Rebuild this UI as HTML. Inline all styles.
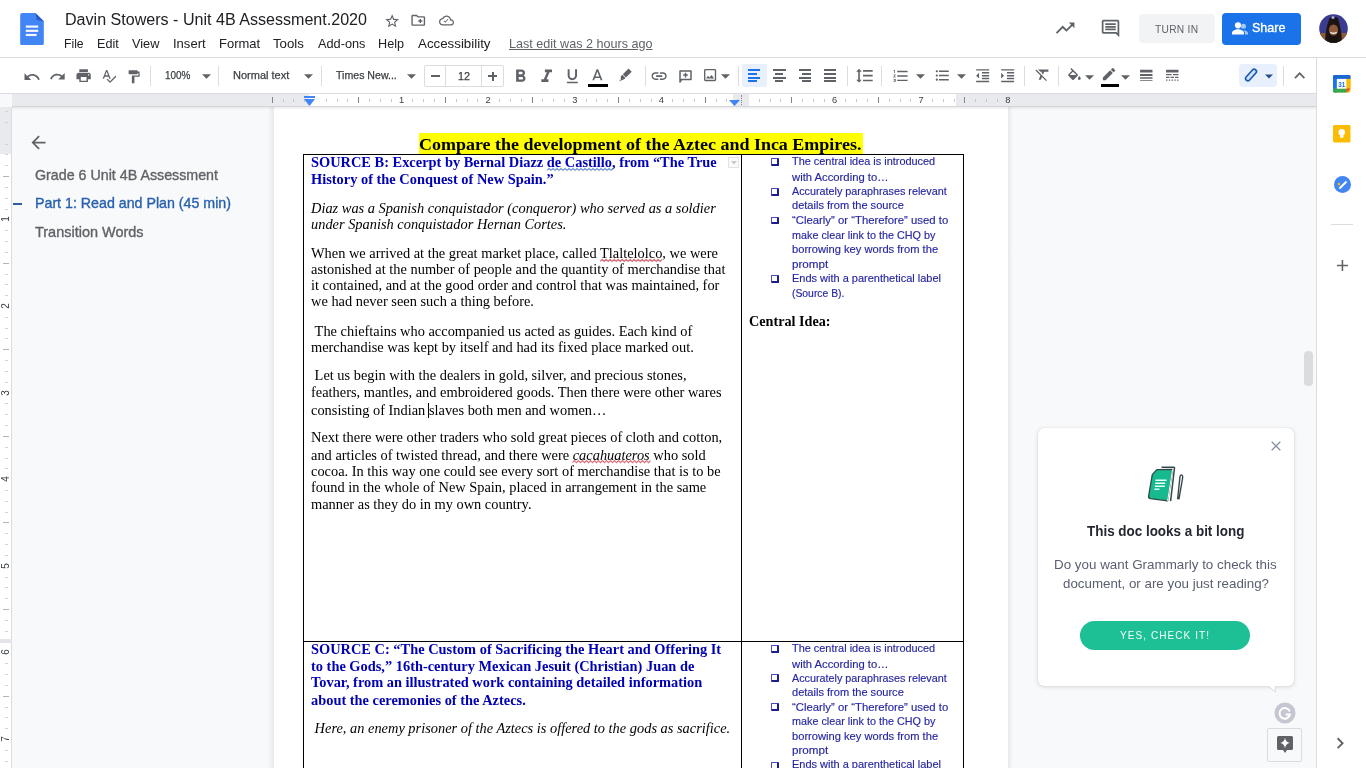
<!DOCTYPE html>
<html><head><meta charset="utf-8"><title>Davin Stowers - Unit 4B Assessment.2020 - Google Docs</title>
<style>
*{margin:0;padding:0;box-sizing:border-box}
html,body{width:1366px;height:768px;overflow:hidden;background:#f8f9fa;font-family:"Liberation Sans",sans-serif;position:relative}
.a{position:absolute}
#root{position:absolute;left:0;top:0;width:1366px;height:768px;will-change:transform}
</style></head><body><div id="root">
<div class="a" style="left:0px;top:0px;width:1366px;height:768px;background:#f8f9fa"></div>
<div class="a" style="left:274px;top:107px;width:734px;height:661px;background:#fff"></div>
<div class="a" style="left:268px;top:107px;width:6px;height:661px;background:linear-gradient(to right,rgba(60,64,67,0),rgba(60,64,67,.09))"></div>
<div class="a" style="left:1008px;top:107px;width:5px;height:661px;background:linear-gradient(to left,rgba(60,64,67,0),rgba(60,64,67,.09))"></div>
<div class="a" style="left:0px;top:0px;width:1366px;height:58px;background:#fff;border-bottom:1px solid #dadce0"></div>
<div class="a" style="left:0px;top:58px;width:1316px;height:36px;background:#fff;border-bottom:1px solid #dadce0"></div>
<div class="a" style="left:1316px;top:58px;width:50px;height:710px;background:#fff;border-left:1px solid #dadce0"></div>
<div class="a" style="left:274px;top:107px;width:734px;height:661px;overflow:hidden"><div class="a" style="left:-274px;top:-107px;width:1366px;height:768px">
<div class="a" style="left:419px;top:133px;width:444px;height:21px;background:#ffff00"></div>
<div class="a" style="left:303px;top:154px;width:661px;height:1px;background:#000"></div>
<div class="a" style="left:303px;top:641px;width:661px;height:1px;background:#000"></div>
<div class="a" style="left:303px;top:154px;width:1px;height:614px;background:#000"></div>
<div class="a" style="left:741px;top:154px;width:1px;height:614px;background:#000"></div>
<div class="a" style="left:963px;top:154px;width:1px;height:614px;background:#000"></div>
<div class="a" style="left:770.5px;top:158px;width:8.5px;height:7.5px;border:1px solid #4a4ac0;border-right:2px solid #1c1c8a;border-bottom:2px solid #1c1c8a;border-radius:1px;"></div>
<div class="a" style="left:770.5px;top:188px;width:8.5px;height:7.5px;border:1px solid #4a4ac0;border-right:2px solid #1c1c8a;border-bottom:2px solid #1c1c8a;border-radius:1px;"></div>
<div class="a" style="left:770.5px;top:216.5px;width:8.5px;height:7.5px;border:1px solid #4a4ac0;border-right:2px solid #1c1c8a;border-bottom:2px solid #1c1c8a;border-radius:1px;"></div>
<div class="a" style="left:770.5px;top:275px;width:8.5px;height:7.5px;border:1px solid #4a4ac0;border-right:2px solid #1c1c8a;border-bottom:2px solid #1c1c8a;border-radius:1px;"></div>
<div class="a" style="left:770.5px;top:645px;width:8.5px;height:7.5px;border:1px solid #4a4ac0;border-right:2px solid #1c1c8a;border-bottom:2px solid #1c1c8a;border-radius:1px;"></div>
<div class="a" style="left:770.5px;top:674px;width:8.5px;height:7.5px;border:1px solid #4a4ac0;border-right:2px solid #1c1c8a;border-bottom:2px solid #1c1c8a;border-radius:1px;"></div>
<div class="a" style="left:770.5px;top:703px;width:8.5px;height:7.5px;border:1px solid #4a4ac0;border-right:2px solid #1c1c8a;border-bottom:2px solid #1c1c8a;border-radius:1px;"></div>
<div class="a" style="left:770.5px;top:762px;width:8.5px;height:7.5px;border:1px solid #4a4ac0;border-right:2px solid #1c1c8a;border-bottom:2px solid #1c1c8a;border-radius:1px;"></div>
<svg class="a" style="left:0;top:0" width="1366" height="768"><path d="M547.0 170.3 L549.0 168.3 L551.0 170.3 L553.0 168.3 L555.0 170.3 L557.0 168.3 L559.0 170.3 L561.0 168.3 L563.0 170.3 L565.0 168.3 L567.0 170.3 L569.0 168.3 L571.0 170.3 L573.0 168.3 L575.0 170.3 L577.0 168.3 L579.0 170.3 L581.0 168.3 L583.0 170.3 L585.0 168.3 L587.0 170.3 L589.0 168.3 L591.0 170.3 L593.0 168.3 L595.0 170.3 L597.0 168.3 L599.0 170.3 L601.0 168.3 L603.0 170.3 L605.0 168.3 L607.0 170.3 L609.0 168.3 L611.0 170.3 L613.0 168.3" stroke="#7fa3d6" stroke-width="1.2" fill="none"/></svg>
<svg class="a" style="left:0;top:0" width="1366" height="768"><path d="M600.2 261.4 L602.2 259.4 L604.2 261.4 L606.2 259.4 L608.2 261.4 L610.2 259.4 L612.2 261.4 L614.2 259.4 L616.2 261.4 L618.2 259.4 L620.2 261.4 L622.2 259.4 L624.2 261.4 L626.2 259.4 L628.2 261.4 L630.2 259.4 L632.2 261.4 L634.2 259.4 L636.2 261.4 L638.2 259.4 L640.2 261.4 L642.2 259.4 L644.2 261.4 L646.2 259.4 L648.2 261.4 L650.2 259.4 L652.2 261.4 L654.2 259.4 L656.2 261.4 L658.2 259.4 L660.2 261.4 L662.2 259.4" stroke="#d9707a" stroke-width="1.2" fill="none"/></svg>
<svg class="a" style="left:0;top:0" width="1366" height="768"><path d="M572.5 462.6 L574.5 460.6 L576.5 462.6 L578.5 460.6 L580.5 462.6 L582.5 460.6 L584.5 462.6 L586.5 460.6 L588.5 462.6 L590.5 460.6 L592.5 462.6 L594.5 460.6 L596.5 462.6 L598.5 460.6 L600.5 462.6 L602.5 460.6 L604.5 462.6 L606.5 460.6 L608.5 462.6 L610.5 460.6 L612.5 462.6 L614.5 460.6 L616.5 462.6 L618.5 460.6 L620.5 462.6 L622.5 460.6 L624.5 462.6 L626.5 460.6 L628.5 462.6 L630.5 460.6 L632.5 462.6 L634.5 460.6 L636.5 462.6 L638.5 460.6 L640.5 462.6 L642.5 460.6 L644.5 462.6 L646.5 460.6 L648.5 462.6 L650.5 460.6" stroke="#d9707a" stroke-width="1.2" fill="none"/></svg>
<div class="a" style="left:428px;top:403px;width:1px;height:14.5px;background:#000"></div>
<div class="a" style="left:728.3px;top:157px;width:11px;height:10.5px;border:1px solid #e3e3e3;background:#fafafa"></div>
<svg class="a" style="left:731px;top:160.5px" width="6" height="4" viewBox="0 0 6 4"><path d="M0 0h6L3 3.5z" fill="#c8c8c8"/></svg>
<div class="a" style="left:419.30px;top:134.66px;font-family:'Liberation Serif',serif;font-size:16.7px;font-weight:bold;line-height:20px;white-space:nowrap;color:#000;transform:scaleX(1.0779);transform-origin:0 0;">Compare the development of the Aztec and Inca Empires.</div>
<div class="a" style="left:311.00px;top:151.74px;font-family:'Liberation Serif',serif;font-size:14.4px;font-weight:bold;line-height:20px;white-space:nowrap;color:#0000b5;">SOURCE B: Excerpt by Bernal Diazz de Castillo, from “The True</div>
<div class="a" style="left:311.00px;top:169.14px;font-family:'Liberation Serif',serif;font-size:14.4px;font-weight:bold;line-height:20px;white-space:nowrap;color:#0000b5;">History of the Conquest of New Spain.”</div>
<div class="a" style="left:311.00px;top:197.64px;font-family:'Liberation Serif',serif;font-size:14.4px;font-style:italic;line-height:20px;white-space:nowrap;color:#000;">Diaz was a Spanish conquistador (conqueror) who served as a soldier</div>
<div class="a" style="left:311.00px;top:213.74px;font-family:'Liberation Serif',serif;font-size:14.4px;font-style:italic;line-height:20px;white-space:nowrap;color:#000;">under Spanish conquistador Hernan Cortes.</div>
<div class="a" style="left:311.00px;top:242.94px;font-family:'Liberation Serif',serif;font-size:14.4px;line-height:20px;white-space:nowrap;color:#000;">When we arrived at the great market place, called Tlaltelolco, we were</div>
<div class="a" style="left:311.00px;top:258.74px;font-family:'Liberation Serif',serif;font-size:14.4px;line-height:20px;white-space:nowrap;color:#000;">astonished at the number of people and the quantity of merchandise that</div>
<div class="a" style="left:311.00px;top:274.94px;font-family:'Liberation Serif',serif;font-size:14.4px;line-height:20px;white-space:nowrap;color:#000;">it contained, and at the good order and control that was maintained, for</div>
<div class="a" style="left:311.00px;top:291.24px;font-family:'Liberation Serif',serif;font-size:14.4px;line-height:20px;white-space:nowrap;color:#000;">we had never seen such a thing before.</div>
<div class="a" style="left:311.00px;top:320.74px;font-family:'Liberation Serif',serif;font-size:14.4px;line-height:20px;white-space:nowrap;color:#000;">&nbsp;The chieftains who accompanied us acted as guides. Each kind of</div>
<div class="a" style="left:311.00px;top:336.74px;font-family:'Liberation Serif',serif;font-size:14.4px;line-height:20px;white-space:nowrap;color:#000;">merchandise was kept by itself and had its fixed place marked out.</div>
<div class="a" style="left:311.00px;top:365.44px;font-family:'Liberation Serif',serif;font-size:14.4px;line-height:20px;white-space:nowrap;color:#000;">&nbsp;Let us begin with the dealers in gold, silver, and precious stones,</div>
<div class="a" style="left:311.00px;top:381.74px;font-family:'Liberation Serif',serif;font-size:14.4px;line-height:20px;white-space:nowrap;color:#000;">feathers, mantles, and embroidered goods. Then there were other wares</div>
<div class="a" style="left:311.00px;top:399.84px;font-family:'Liberation Serif',serif;font-size:14.4px;line-height:20px;white-space:nowrap;color:#000;">consisting of Indian slaves both men and women…</div>
<div class="a" style="left:311.00px;top:427.04px;font-family:'Liberation Serif',serif;font-size:14.4px;line-height:20px;white-space:nowrap;color:#000;">Next there were other traders who sold great pieces of cloth and cotton,</div>
<div class="a" style="left:311.00px;top:444.54px;font-family:'Liberation Serif',serif;font-size:14.4px;line-height:20px;white-space:nowrap;color:#000;">and articles of twisted thread, and there were <i>cacahuateros</i> who sold</div>
<div class="a" style="left:311.00px;top:461.14px;font-family:'Liberation Serif',serif;font-size:14.4px;line-height:20px;white-space:nowrap;color:#000;">cocoa. In this way one could see every sort of merchandise that is to be</div>
<div class="a" style="left:311.00px;top:477.24px;font-family:'Liberation Serif',serif;font-size:14.4px;line-height:20px;white-space:nowrap;color:#000;">found in the whole of New Spain, placed in arrangement in the same</div>
<div class="a" style="left:311.00px;top:493.94px;font-family:'Liberation Serif',serif;font-size:14.4px;line-height:20px;white-space:nowrap;color:#000;">manner as they do in my own country.</div>
<div class="a" style="left:311.00px;top:638.84px;font-family:'Liberation Serif',serif;font-size:14.4px;font-weight:bold;line-height:20px;white-space:nowrap;color:#0000b5;">SOURCE C: “The Custom of Sacrificing the Heart and Offering It</div>
<div class="a" style="left:311.00px;top:656.14px;font-family:'Liberation Serif',serif;font-size:14.4px;font-weight:bold;line-height:20px;white-space:nowrap;color:#0000b5;">to the Gods,” 16th-century Mexican Jesuit (Christian) Juan de</div>
<div class="a" style="left:311.00px;top:671.74px;font-family:'Liberation Serif',serif;font-size:14.4px;font-weight:bold;line-height:20px;white-space:nowrap;color:#0000b5;">Tovar, from an illustrated work containing detailed information</div>
<div class="a" style="left:311.00px;top:690.14px;font-family:'Liberation Serif',serif;font-size:14.4px;font-weight:bold;line-height:20px;white-space:nowrap;color:#0000b5;">about the ceremonies of the Aztecs.</div>
<div class="a" style="left:311.00px;top:718.14px;font-family:'Liberation Serif',serif;font-size:14.4px;font-style:italic;line-height:20px;white-space:nowrap;color:#000;">&nbsp;Here, an enemy prisoner of the Aztecs is offered to the gods as sacrifice.</div>
<div class="a" style="left:749.00px;top:310.74px;font-family:'Liberation Serif',serif;font-size:14.4px;font-weight:bold;line-height:20px;white-space:nowrap;color:#000;transform:scaleX(0.9851);transform-origin:0 0;">Central Idea:</div>
<div class="a" style="left:792.00px;top:150.93px;font-family:'Liberation Sans',sans-serif;font-size:10.6px;-webkit-text-stroke:0.15px currentColor;line-height:20px;white-space:nowrap;color:#2626a2;transform:scaleX(1.0303);transform-origin:0 0;">The central idea is introduced</div>
<div class="a" style="left:792.00px;top:167.03px;font-family:'Liberation Sans',sans-serif;font-size:10.6px;-webkit-text-stroke:0.15px currentColor;line-height:20px;white-space:nowrap;color:#2626a2;transform:scaleX(1.0641);transform-origin:0 0;">with According to…</div>
<div class="a" style="left:792.00px;top:181.13px;font-family:'Liberation Sans',sans-serif;font-size:10.6px;-webkit-text-stroke:0.15px currentColor;line-height:20px;white-space:nowrap;color:#2626a2;transform:scaleX(1.0182);transform-origin:0 0;">Accurately paraphrases relevant</div>
<div class="a" style="left:792.00px;top:194.63px;font-family:'Liberation Sans',sans-serif;font-size:10.6px;-webkit-text-stroke:0.15px currentColor;line-height:20px;white-space:nowrap;color:#2626a2;transform:scaleX(1.0432);transform-origin:0 0;">details from the source</div>
<div class="a" style="left:792.00px;top:209.53px;font-family:'Liberation Sans',sans-serif;font-size:10.6px;-webkit-text-stroke:0.15px currentColor;line-height:20px;white-space:nowrap;color:#2626a2;transform:scaleX(1.0697);transform-origin:0 0;">“Clearly” or “Therefore” used to</div>
<div class="a" style="left:792.00px;top:224.73px;font-family:'Liberation Sans',sans-serif;font-size:10.6px;-webkit-text-stroke:0.15px currentColor;line-height:20px;white-space:nowrap;color:#2626a2;transform:scaleX(1.0183);transform-origin:0 0;">make clear link to the CHQ by</div>
<div class="a" style="left:792.00px;top:239.43px;font-family:'Liberation Sans',sans-serif;font-size:10.6px;-webkit-text-stroke:0.15px currentColor;line-height:20px;white-space:nowrap;color:#2626a2;transform:scaleX(1.0514);transform-origin:0 0;">borrowing key words from the</div>
<div class="a" style="left:792.00px;top:253.83px;font-family:'Liberation Sans',sans-serif;font-size:10.6px;-webkit-text-stroke:0.15px currentColor;line-height:20px;white-space:nowrap;color:#2626a2;transform:scaleX(1.1005);transform-origin:0 0;">prompt</div>
<div class="a" style="left:792.00px;top:267.73px;font-family:'Liberation Sans',sans-serif;font-size:10.6px;-webkit-text-stroke:0.15px currentColor;line-height:20px;white-space:nowrap;color:#2626a2;transform:scaleX(1.0369);transform-origin:0 0;">Ends with a parenthetical label</div>
<div class="a" style="left:792.00px;top:283.43px;font-family:'Liberation Sans',sans-serif;font-size:10.6px;-webkit-text-stroke:0.15px currentColor;line-height:20px;white-space:nowrap;color:#2626a2;transform:scaleX(0.9780);transform-origin:0 0;">(Source B).</div>
<div class="a" style="left:792.00px;top:638.13px;font-family:'Liberation Sans',sans-serif;font-size:10.6px;-webkit-text-stroke:0.15px currentColor;line-height:20px;white-space:nowrap;color:#2626a2;transform:scaleX(1.0303);transform-origin:0 0;">The central idea is introduced</div>
<div class="a" style="left:792.00px;top:654.13px;font-family:'Liberation Sans',sans-serif;font-size:10.6px;-webkit-text-stroke:0.15px currentColor;line-height:20px;white-space:nowrap;color:#2626a2;transform:scaleX(1.0641);transform-origin:0 0;">with According to…</div>
<div class="a" style="left:792.00px;top:668.33px;font-family:'Liberation Sans',sans-serif;font-size:10.6px;-webkit-text-stroke:0.15px currentColor;line-height:20px;white-space:nowrap;color:#2626a2;transform:scaleX(1.0182);transform-origin:0 0;">Accurately paraphrases relevant</div>
<div class="a" style="left:792.00px;top:681.73px;font-family:'Liberation Sans',sans-serif;font-size:10.6px;-webkit-text-stroke:0.15px currentColor;line-height:20px;white-space:nowrap;color:#2626a2;transform:scaleX(1.0432);transform-origin:0 0;">details from the source</div>
<div class="a" style="left:792.00px;top:696.53px;font-family:'Liberation Sans',sans-serif;font-size:10.6px;-webkit-text-stroke:0.15px currentColor;line-height:20px;white-space:nowrap;color:#2626a2;transform:scaleX(1.0697);transform-origin:0 0;">“Clearly” or “Therefore” used to</div>
<div class="a" style="left:792.00px;top:711.33px;font-family:'Liberation Sans',sans-serif;font-size:10.6px;-webkit-text-stroke:0.15px currentColor;line-height:20px;white-space:nowrap;color:#2626a2;transform:scaleX(1.0183);transform-origin:0 0;">make clear link to the CHQ by</div>
<div class="a" style="left:792.00px;top:726.33px;font-family:'Liberation Sans',sans-serif;font-size:10.6px;-webkit-text-stroke:0.15px currentColor;line-height:20px;white-space:nowrap;color:#2626a2;transform:scaleX(1.0514);transform-origin:0 0;">borrowing key words from the</div>
<div class="a" style="left:792.00px;top:740.13px;font-family:'Liberation Sans',sans-serif;font-size:10.6px;-webkit-text-stroke:0.15px currentColor;line-height:20px;white-space:nowrap;color:#2626a2;transform:scaleX(1.1005);transform-origin:0 0;">prompt</div>
<div class="a" style="left:792.00px;top:754.33px;font-family:'Liberation Sans',sans-serif;font-size:10.6px;-webkit-text-stroke:0.15px currentColor;line-height:20px;white-space:nowrap;color:#2626a2;transform:scaleX(1.0369);transform-origin:0 0;">Ends with a parenthetical label</div>
<div class="a" style="left:792.00px;top:770.33px;font-family:'Liberation Sans',sans-serif;font-size:10.6px;-webkit-text-stroke:0.15px currentColor;line-height:20px;white-space:nowrap;color:#2626a2;transform:scaleX(0.9780);transform-origin:0 0;">(Source B).</div>
</div></div>
<div class="a" style="left:12px;top:94px;width:1304px;height:13px;background:#e8eaed;border-bottom:1px solid #d3d5d8"></div>
<div class="a" style="left:309px;top:94px;width:647px;height:12px;background:#fff"></div>
<div class="a" style="left:733px;top:94px;width:16px;height:12px;background:#e8eaed"></div>
<div class="a" style="left:12px;top:107px;width:1304px;height:3px;background:linear-gradient(rgba(60,64,67,.10),rgba(60,64,67,0))"></div>
<div class="a" style="left:272px;top:97px;width:1px;height:5.5px;background:#80868b"></div>
<div class="a" style="left:283px;top:99px;width:1px;height:3px;background:#c4c7cb"></div>
<div class="a" style="left:293px;top:99px;width:1px;height:3px;background:#c4c7cb"></div>
<div class="a" style="left:304px;top:99px;width:1px;height:3px;background:#c4c7cb"></div>
<div class="a" style="left:326px;top:99px;width:1px;height:3px;background:#c4c7cb"></div>
<div class="a" style="left:337px;top:99px;width:1px;height:3px;background:#c4c7cb"></div>
<div class="a" style="left:347px;top:99px;width:1px;height:3px;background:#c4c7cb"></div>
<div class="a" style="left:358px;top:97px;width:1px;height:5.5px;background:#80868b"></div>
<div class="a" style="left:369px;top:99px;width:1px;height:3px;background:#c4c7cb"></div>
<div class="a" style="left:380px;top:99px;width:1px;height:3px;background:#c4c7cb"></div>
<div class="a" style="left:391px;top:99px;width:1px;height:3px;background:#c4c7cb"></div>
<div class="a" style="left:399.00px;top:89.58px;font-family:'Liberation Sans',sans-serif;font-size:9.3px;line-height:20px;white-space:nowrap;color:#3c4043;">1</div>
<div class="a" style="left:412px;top:99px;width:1px;height:3px;background:#c4c7cb"></div>
<div class="a" style="left:423px;top:99px;width:1px;height:3px;background:#c4c7cb"></div>
<div class="a" style="left:434px;top:99px;width:1px;height:3px;background:#c4c7cb"></div>
<div class="a" style="left:445px;top:97px;width:1px;height:5.5px;background:#80868b"></div>
<div class="a" style="left:456px;top:99px;width:1px;height:3px;background:#c4c7cb"></div>
<div class="a" style="left:467px;top:99px;width:1px;height:3px;background:#c4c7cb"></div>
<div class="a" style="left:477px;top:99px;width:1px;height:3px;background:#c4c7cb"></div>
<div class="a" style="left:485.60px;top:89.58px;font-family:'Liberation Sans',sans-serif;font-size:9.3px;line-height:20px;white-space:nowrap;color:#3c4043;">2</div>
<div class="a" style="left:499px;top:99px;width:1px;height:3px;background:#c4c7cb"></div>
<div class="a" style="left:510px;top:99px;width:1px;height:3px;background:#c4c7cb"></div>
<div class="a" style="left:521px;top:99px;width:1px;height:3px;background:#c4c7cb"></div>
<div class="a" style="left:532px;top:97px;width:1px;height:5.5px;background:#80868b"></div>
<div class="a" style="left:542px;top:99px;width:1px;height:3px;background:#c4c7cb"></div>
<div class="a" style="left:553px;top:99px;width:1px;height:3px;background:#c4c7cb"></div>
<div class="a" style="left:564px;top:99px;width:1px;height:3px;background:#c4c7cb"></div>
<div class="a" style="left:572.20px;top:89.58px;font-family:'Liberation Sans',sans-serif;font-size:9.3px;line-height:20px;white-space:nowrap;color:#3c4043;">3</div>
<div class="a" style="left:586px;top:99px;width:1px;height:3px;background:#c4c7cb"></div>
<div class="a" style="left:596px;top:99px;width:1px;height:3px;background:#c4c7cb"></div>
<div class="a" style="left:607px;top:99px;width:1px;height:3px;background:#c4c7cb"></div>
<div class="a" style="left:618px;top:97px;width:1px;height:5.5px;background:#80868b"></div>
<div class="a" style="left:629px;top:99px;width:1px;height:3px;background:#c4c7cb"></div>
<div class="a" style="left:640px;top:99px;width:1px;height:3px;background:#c4c7cb"></div>
<div class="a" style="left:651px;top:99px;width:1px;height:3px;background:#c4c7cb"></div>
<div class="a" style="left:658.80px;top:89.58px;font-family:'Liberation Sans',sans-serif;font-size:9.3px;line-height:20px;white-space:nowrap;color:#3c4043;">4</div>
<div class="a" style="left:672px;top:99px;width:1px;height:3px;background:#c4c7cb"></div>
<div class="a" style="left:683px;top:99px;width:1px;height:3px;background:#c4c7cb"></div>
<div class="a" style="left:694px;top:99px;width:1px;height:3px;background:#c4c7cb"></div>
<div class="a" style="left:705px;top:97px;width:1px;height:5.5px;background:#80868b"></div>
<div class="a" style="left:716px;top:99px;width:1px;height:3px;background:#c4c7cb"></div>
<div class="a" style="left:726px;top:99px;width:1px;height:3px;background:#c4c7cb"></div>
<div class="a" style="left:737px;top:99px;width:1px;height:3px;background:#c4c7cb"></div>
<div class="a" style="left:759px;top:99px;width:1px;height:3px;background:#c4c7cb"></div>
<div class="a" style="left:770px;top:99px;width:1px;height:3px;background:#c4c7cb"></div>
<div class="a" style="left:780px;top:99px;width:1px;height:3px;background:#c4c7cb"></div>
<div class="a" style="left:791px;top:97px;width:1px;height:5.5px;background:#80868b"></div>
<div class="a" style="left:802px;top:99px;width:1px;height:3px;background:#c4c7cb"></div>
<div class="a" style="left:813px;top:99px;width:1px;height:3px;background:#c4c7cb"></div>
<div class="a" style="left:824px;top:99px;width:1px;height:3px;background:#c4c7cb"></div>
<div class="a" style="left:832.00px;top:89.58px;font-family:'Liberation Sans',sans-serif;font-size:9.3px;line-height:20px;white-space:nowrap;color:#3c4043;">6</div>
<div class="a" style="left:845px;top:99px;width:1px;height:3px;background:#c4c7cb"></div>
<div class="a" style="left:856px;top:99px;width:1px;height:3px;background:#c4c7cb"></div>
<div class="a" style="left:867px;top:99px;width:1px;height:3px;background:#c4c7cb"></div>
<div class="a" style="left:878px;top:97px;width:1px;height:5.5px;background:#80868b"></div>
<div class="a" style="left:889px;top:99px;width:1px;height:3px;background:#c4c7cb"></div>
<div class="a" style="left:900px;top:99px;width:1px;height:3px;background:#c4c7cb"></div>
<div class="a" style="left:910px;top:99px;width:1px;height:3px;background:#c4c7cb"></div>
<div class="a" style="left:918.60px;top:89.58px;font-family:'Liberation Sans',sans-serif;font-size:9.3px;line-height:20px;white-space:nowrap;color:#3c4043;">7</div>
<div class="a" style="left:932px;top:99px;width:1px;height:3px;background:#c4c7cb"></div>
<div class="a" style="left:943px;top:99px;width:1px;height:3px;background:#c4c7cb"></div>
<div class="a" style="left:954px;top:99px;width:1px;height:3px;background:#c4c7cb"></div>
<div class="a" style="left:964px;top:97px;width:1px;height:5.5px;background:#80868b"></div>
<div class="a" style="left:975px;top:99px;width:1px;height:3px;background:#c4c7cb"></div>
<div class="a" style="left:986px;top:99px;width:1px;height:3px;background:#c4c7cb"></div>
<div class="a" style="left:997px;top:99px;width:1px;height:3px;background:#c4c7cb"></div>
<div class="a" style="left:1005.20px;top:89.58px;font-family:'Liberation Sans',sans-serif;font-size:9.3px;line-height:20px;white-space:nowrap;color:#3c4043;">8</div>
<div class="a" style="left:304px;top:95.5px;width:11px;height:2.5px;background:#4285f4"></div>
<svg class="a" style="left:304px;top:99px" width="11" height="7" viewBox="0 0 11 7"><path d="M0 0h11L5.5 7z" fill="#4285f4"/></svg>
<svg class="a" style="left:729px;top:100px" width="11" height="6" viewBox="0 0 11 6"><path d="M0 0h11L5.5 6z" fill="#4285f4"/></svg>
<div class="a" style="left:741px;top:95px;width:1px;height:10px;border-left:1px dotted #80868b"></div>
<div class="a" style="left:0px;top:107px;width:12px;height:661px;background:#fff;border-right:1px solid #dadce0"></div>
<div class="a" style="left:0px;top:107px;width:12px;height:47px;background:#e8eaed;border-right:1px solid #dadce0"></div>
<div class="a" style="left:5px;top:111px;width:3px;height:1px;background:#d0d3d6"></div>
<div class="a" style="left:5px;top:122px;width:3px;height:1px;background:#d0d3d6"></div>
<div class="a" style="left:5px;top:144px;width:3px;height:1px;background:#d0d3d6"></div>
<div class="a" style="left:5px;top:154px;width:3px;height:1px;background:#d0d3d6"></div>
<div class="a" style="left:5px;top:165px;width:3px;height:1px;background:#d0d3d6"></div>
<div class="a" style="left:3px;top:176px;width:6px;height:1px;background:#b0b4b8"></div>
<div class="a" style="left:5px;top:187px;width:3px;height:1px;background:#d0d3d6"></div>
<div class="a" style="left:5px;top:198px;width:3px;height:1px;background:#d0d3d6"></div>
<div class="a" style="left:5px;top:209px;width:3px;height:1px;background:#d0d3d6"></div>
<div class="a" style="left:0px;top:212.4px;width:12px;height:14px;font-size:10px;color:#3c4043;text-align:center;line-height:14px;transform:rotate(-90deg)">1</div>
<div class="a" style="left:5px;top:230px;width:3px;height:1px;background:#d0d3d6"></div>
<div class="a" style="left:5px;top:241px;width:3px;height:1px;background:#d0d3d6"></div>
<div class="a" style="left:5px;top:252px;width:3px;height:1px;background:#d0d3d6"></div>
<div class="a" style="left:3px;top:263px;width:6px;height:1px;background:#b0b4b8"></div>
<div class="a" style="left:5px;top:274px;width:3px;height:1px;background:#d0d3d6"></div>
<div class="a" style="left:5px;top:284px;width:3px;height:1px;background:#d0d3d6"></div>
<div class="a" style="left:5px;top:295px;width:3px;height:1px;background:#d0d3d6"></div>
<div class="a" style="left:0px;top:299.0px;width:12px;height:14px;font-size:10px;color:#3c4043;text-align:center;line-height:14px;transform:rotate(-90deg)">2</div>
<div class="a" style="left:5px;top:317px;width:3px;height:1px;background:#d0d3d6"></div>
<div class="a" style="left:5px;top:328px;width:3px;height:1px;background:#d0d3d6"></div>
<div class="a" style="left:5px;top:338px;width:3px;height:1px;background:#d0d3d6"></div>
<div class="a" style="left:3px;top:349px;width:6px;height:1px;background:#b0b4b8"></div>
<div class="a" style="left:5px;top:360px;width:3px;height:1px;background:#d0d3d6"></div>
<div class="a" style="left:5px;top:371px;width:3px;height:1px;background:#d0d3d6"></div>
<div class="a" style="left:5px;top:382px;width:3px;height:1px;background:#d0d3d6"></div>
<div class="a" style="left:0px;top:385.6px;width:12px;height:14px;font-size:10px;color:#3c4043;text-align:center;line-height:14px;transform:rotate(-90deg)">3</div>
<div class="a" style="left:5px;top:403px;width:3px;height:1px;background:#d0d3d6"></div>
<div class="a" style="left:5px;top:414px;width:3px;height:1px;background:#d0d3d6"></div>
<div class="a" style="left:5px;top:425px;width:3px;height:1px;background:#d0d3d6"></div>
<div class="a" style="left:3px;top:436px;width:6px;height:1px;background:#b0b4b8"></div>
<div class="a" style="left:5px;top:447px;width:3px;height:1px;background:#d0d3d6"></div>
<div class="a" style="left:5px;top:458px;width:3px;height:1px;background:#d0d3d6"></div>
<div class="a" style="left:5px;top:468px;width:3px;height:1px;background:#d0d3d6"></div>
<div class="a" style="left:0px;top:472.2px;width:12px;height:14px;font-size:10px;color:#3c4043;text-align:center;line-height:14px;transform:rotate(-90deg)">4</div>
<div class="a" style="left:5px;top:490px;width:3px;height:1px;background:#d0d3d6"></div>
<div class="a" style="left:5px;top:501px;width:3px;height:1px;background:#d0d3d6"></div>
<div class="a" style="left:5px;top:512px;width:3px;height:1px;background:#d0d3d6"></div>
<div class="a" style="left:3px;top:522px;width:6px;height:1px;background:#b0b4b8"></div>
<div class="a" style="left:5px;top:533px;width:3px;height:1px;background:#d0d3d6"></div>
<div class="a" style="left:5px;top:544px;width:3px;height:1px;background:#d0d3d6"></div>
<div class="a" style="left:5px;top:555px;width:3px;height:1px;background:#d0d3d6"></div>
<div class="a" style="left:0px;top:558.8px;width:12px;height:14px;font-size:10px;color:#3c4043;text-align:center;line-height:14px;transform:rotate(-90deg)">5</div>
<div class="a" style="left:5px;top:577px;width:3px;height:1px;background:#d0d3d6"></div>
<div class="a" style="left:5px;top:587px;width:3px;height:1px;background:#d0d3d6"></div>
<div class="a" style="left:5px;top:598px;width:3px;height:1px;background:#d0d3d6"></div>
<div class="a" style="left:3px;top:609px;width:6px;height:1px;background:#b0b4b8"></div>
<div class="a" style="left:5px;top:620px;width:3px;height:1px;background:#d0d3d6"></div>
<div class="a" style="left:5px;top:631px;width:3px;height:1px;background:#d0d3d6"></div>
<div class="a" style="left:5px;top:642px;width:3px;height:1px;background:#d0d3d6"></div>
<div class="a" style="left:0px;top:645.4px;width:12px;height:14px;font-size:10px;color:#3c4043;text-align:center;line-height:14px;transform:rotate(-90deg)">6</div>
<div class="a" style="left:5px;top:663px;width:3px;height:1px;background:#d0d3d6"></div>
<div class="a" style="left:5px;top:674px;width:3px;height:1px;background:#d0d3d6"></div>
<div class="a" style="left:5px;top:685px;width:3px;height:1px;background:#d0d3d6"></div>
<div class="a" style="left:3px;top:696px;width:6px;height:1px;background:#b0b4b8"></div>
<div class="a" style="left:5px;top:707px;width:3px;height:1px;background:#d0d3d6"></div>
<div class="a" style="left:5px;top:717px;width:3px;height:1px;background:#d0d3d6"></div>
<div class="a" style="left:5px;top:728px;width:3px;height:1px;background:#d0d3d6"></div>
<div class="a" style="left:0px;top:732.0px;width:12px;height:14px;font-size:10px;color:#3c4043;text-align:center;line-height:14px;transform:rotate(-90deg)">7</div>
<div class="a" style="left:5px;top:750px;width:3px;height:1px;background:#d0d3d6"></div>
<div class="a" style="left:5px;top:761px;width:3px;height:1px;background:#d0d3d6"></div>
<div class="a" style="left:0px;top:639px;width:12px;height:4px;background:#e3e5e8"></div>
<svg class="a" style="left:27.50px;top:131.50px" width="21.00" height="21.00" viewBox="0 0 24 24"><path d="M20 11H7.83l5.59-5.59L12 4l-8 8 8 8 1.41-1.41L7.83 13H20v-2z" fill="#5f6368"/></svg>
<div class="a" style="left:34.60px;top:164.98px;font-family:'Liberation Sans',sans-serif;font-size:14.5px;-webkit-text-stroke:0.35px currentColor;line-height:20px;white-space:nowrap;color:#5f6368;transform:scaleX(0.9830);transform-origin:0 0;">Grade 6 Unit 4B Assessment</div>
<div class="a" style="left:13px;top:202.5px;width:9px;height:2px;background:#2f5d9e"></div>
<div class="a" style="left:34.60px;top:192.98px;font-family:'Liberation Sans',sans-serif;font-size:14.5px;-webkit-text-stroke:0.35px currentColor;line-height:20px;white-space:nowrap;color:#2860b0;transform:scaleX(0.9805);transform-origin:0 0;">Part 1: Read and Plan (45 min)</div>
<div class="a" style="left:34.60px;top:221.68px;font-family:'Liberation Sans',sans-serif;font-size:14.5px;-webkit-text-stroke:0.35px currentColor;line-height:20px;white-space:nowrap;color:#5f6368;transform:scaleX(0.9982);transform-origin:0 0;">Transition Words</div>
<svg class="a" style="left:20px;top:12.5px" width="24" height="32.5" viewBox="0 0 24 33">
<path d="M2.2 0h13.3L24 8.5V30.8a2.2 2.2 0 0 1-2.2 2.2H2.2A2.2 2.2 0 0 1 0 30.8V2.2A2.2 2.2 0 0 1 2.2 0z" fill="#4285f4"/>
<path d="M15.5 0L24 8.5L16.8 7.2z" fill="#2a5bc8"/>
<rect x="5.7" y="12.7" width="12.6" height="2.2" fill="#f4f7ff"/>
<rect x="5.7" y="17" width="12.6" height="2.2" fill="#f4f7ff"/>
<rect x="5.7" y="21.2" width="11" height="2.2" fill="#f4f7ff"/>
</svg>
<div class="a" style="left:65.00px;top:10.13px;font-family:'Liberation Sans',sans-serif;font-size:15.8px;line-height:20px;white-space:nowrap;color:#202124;transform:scaleX(1.0176);transform-origin:0 0;">Davin Stowers - Unit 4B Assessment.2020</div>
<svg class="a" style="left:383.64px;top:12.64px" width="16.29" height="16.29" viewBox="0 0 24 24"><path d="M22 9.24l-7.19-.62L12 2 9.19 8.63 2 9.24l5.46 4.73L5.82 21 12 17.27 18.18 21l-1.63-7.03L22 9.24zM12 15.4l-3.76 2.27 1-4.28-3.32-2.88 4.38-.38L12 6.1l1.71 4.04 4.38.38-3.32 2.88 1 4.28L12 15.4z" fill="#5f6368"/></svg>
<svg class="a" style="left:410.12px;top:12.25px" width="16.50" height="16.50" viewBox="0 0 24 24"><path d="M20 6h-8l-2-2H4c-1.1 0-2 .9-2 2v12c0 1.1.9 2 2 2h16c1.1 0 2-.9 2-2V8c0-1.1-.9-2-2-2zm0 12H4V6h5.17l2 2H20v10zm-8-4h2v2h2v-2h2v-2h-2v-2h-2v2h-2z" fill="#5f6368"/></svg>
<svg class="a" style="left:439.00px;top:12.50px" width="15.00" height="15.00" viewBox="0 0 24 24"><path d="M19.35 10.04C18.67 6.59 15.64 4 12 4 9.11 4 6.6 5.64 5.35 8.04 2.34 8.36 0 10.91 0 14c0 3.31 2.69 6 6 6h13c2.76 0 5-2.24 5-5 0-2.64-2.05-4.78-4.65-4.96zM19 18H6c-2.21 0-4-1.79-4-4s1.79-4 4-4h.71C7.37 7.690 9.48 6 12 6c3.04 0 5.5 2.46 5.5 5.5v.5H19c1.66 0 3 1.34 3 3s-1.34 3-3 3zM10 15.5l-2.5-2.5 1-1 1.5 1.5 4-4 1 1z" fill="#5f6368"/></svg>
<div class="a" style="left:64.20px;top:33.50px;font-family:'Liberation Sans',sans-serif;font-size:13px;line-height:20px;white-space:nowrap;color:#202124;transform:scaleX(0.9354);transform-origin:0 0;">File</div>
<div class="a" style="left:97.00px;top:33.50px;font-family:'Liberation Sans',sans-serif;font-size:13px;line-height:20px;white-space:nowrap;color:#202124;transform:scaleX(0.9685);transform-origin:0 0;">Edit</div>
<div class="a" style="left:131.80px;top:33.50px;font-family:'Liberation Sans',sans-serif;font-size:13px;line-height:20px;white-space:nowrap;color:#202124;transform:scaleX(0.9802);transform-origin:0 0;">View</div>
<div class="a" style="left:172.90px;top:33.50px;font-family:'Liberation Sans',sans-serif;font-size:13px;line-height:20px;white-space:nowrap;color:#202124;transform:scaleX(1.0026);transform-origin:0 0;">Insert</div>
<div class="a" style="left:218.90px;top:33.50px;font-family:'Liberation Sans',sans-serif;font-size:13px;line-height:20px;white-space:nowrap;color:#202124;transform:scaleX(0.9983);transform-origin:0 0;">Format</div>
<div class="a" style="left:273.10px;top:33.50px;font-family:'Liberation Sans',sans-serif;font-size:13px;line-height:20px;white-space:nowrap;color:#202124;transform:scaleX(1.0178);transform-origin:0 0;">Tools</div>
<div class="a" style="left:317.50px;top:33.50px;font-family:'Liberation Sans',sans-serif;font-size:13px;line-height:20px;white-space:nowrap;color:#202124;transform:scaleX(0.9810);transform-origin:0 0;">Add-ons</div>
<div class="a" style="left:378.00px;top:33.50px;font-family:'Liberation Sans',sans-serif;font-size:13px;line-height:20px;white-space:nowrap;color:#202124;transform:scaleX(0.9720);transform-origin:0 0;">Help</div>
<div class="a" style="left:417.50px;top:33.50px;font-family:'Liberation Sans',sans-serif;font-size:13px;line-height:20px;white-space:nowrap;color:#202124;transform:scaleX(1.0241);transform-origin:0 0;">Accessibility</div>
<div class="a" style="left:509.00px;top:33.50px;font-family:'Liberation Sans',sans-serif;font-size:13px;text-decoration:underline;line-height:20px;white-space:nowrap;color:#5f6368;transform:scaleX(0.9686);transform-origin:0 0;">Last edit was 2 hours ago</div>
<svg class="a" style="left:1053.94px;top:17.23px" width="22.30" height="22.30" viewBox="0 0 24 24"><path d="M16 6l2.29 2.29-4.88 4.88-4-4L2 16.59 3.41 18l6-6 4 4 6.3-6.29L22 12V6z" fill="#5f6368"/></svg>
<svg class="a" style="left:1100.24px;top:17.85px" width="21.06" height="21.06" viewBox="0 0 24 24"><path d="M21.99 4c0-1.1-.89-2-1.99-2H4c-1.1 0-2 .9-2 2v12c0 1.1.9 2 2 2h14l4 4-.01-18zM20 4v13.17L18.83 16H4V4h16zM6 12h12v2H6zm0-3h12v2H6zm0-3h12v2H6z" fill="#5f6368"/></svg>
<div class="a" style="left:1139px;top:14px;width:75.5px;height:29px;background:#f1f3f4;border-radius:4px"></div>
<div class="a" style="left:1155.00px;top:18.78px;font-family:'Liberation Sans',sans-serif;font-size:11.3px;letter-spacing:.3px;line-height:20px;white-space:nowrap;color:#5f6368;transform:scaleX(0.9056);transform-origin:0 0;">TURN IN</div>
<div class="a" style="left:1222px;top:13px;width:79px;height:32px;background:#1a73e8;border-radius:4px"></div>
<svg class="a" style="left:1232px;top:22px" width="16" height="13" viewBox="0 0 16 13"><circle cx="6" cy="3.3" r="3.1" fill="#fff"/><path d="M0 12.5v-1.6c0-2.3 4-3.6 6-3.6s6 1.3 6 3.6v1.6z" fill="#fff"/><circle cx="11.5" cy="4.2" r="2.5" fill="#fff" opacity=".6"/><path d="M11.2 8.2c2 .2 4.8 1.1 4.8 2.9v1.4h-3v-1.6c0-1.1-.7-2-1.8-2.7z" fill="#fff" opacity=".6"/></svg>
<div class="a" style="left:1251.50px;top:17.79px;font-family:'Liberation Sans',sans-serif;font-size:13.3px;-webkit-text-stroke:0.35px #fff;line-height:20px;white-space:nowrap;color:#fff;transform:scaleX(0.9441);transform-origin:0 0;">Share</div>
<svg class="a" style="left:1319px;top:14px" width="29" height="29" viewBox="0 0 29 29"><defs><clipPath id="av"><circle cx="14.5" cy="14.5" r="14.3"/></clipPath></defs>
<g clip-path="url(#av)"><rect width="29" height="29" fill="#393c90"/>
<rect y="19" width="29" height="10" fill="#8d5a38"/>
<path d="M10.5 4Q14.5 1.5 19 4L21 12Q23 20 23 29H6Q6 20 8 12z" fill="#1c1512"/>
<ellipse cx="14.5" cy="16" rx="4.6" ry="5.6" fill="#8f5a3c"/>
<path d="M11.3 18.3q3.2 2 6.4 0" stroke="#f0e8e0" stroke-width="1.5" fill="none"/>
<path d="M9.5 20.5Q14.5 24 19.5 20.5L19 29H10z" fill="#18110e"/>
<circle cx="14" cy="3.5" r="1.6" fill="#a8a8c8"/>
</g></svg>
<svg class="a" style="left:23.30px;top:67.66px" width="17.96" height="17.96" viewBox="0 0 24 24"><path d="M12.5 8c-2.65 0-5.05.99-6.9 2.6L2 7v9h9l-3.62-3.62c1.39-1.16 3.16-1.88 5.12-1.88 3.54 0 6.55 2.31 7.6 5.5l2.37-.78C21.08 11.03 17.15 8 12.5 8z" fill="#5f6368"/></svg>
<svg class="a" style="left:49.23px;top:67.90px" width="17.14" height="17.14" viewBox="0 0 24 24"><path d="M18.4 10.6C16.55 8.99 14.15 8 11.5 8c-4.65 0-8.58 3.03-9.96 7.22L3.9 16c1.05-3.19 4.05-5.5 7.6-5.5 1.95 0 3.73.72 5.12 1.88L13 16h9V7l-3.6 3.6z" fill="#5f6368"/></svg>
<svg class="a" style="left:74.56px;top:66.75px" width="17.23" height="17.23" viewBox="0 0 24 24"><path d="M19 8H5c-1.66 0-3 1.34-3 3v6h4v4h12v-4h4v-6c0-1.66-1.34-3-3-3zm-3 11H8v-5h8v5zm3-7c-.55 0-1-.45-1-1s.45-1 1-1 1 .45 1 1-.45 1-1 1zm-1-9H6v4h12V3z" fill="#5f6368"/></svg>
<svg class="a" style="left:101.33px;top:67.60px" width="16.03" height="16.03" viewBox="0 0 24 24"><path d="M12.45 16h2.09L9.43 3H7.57L2.46 16h2.09l1.12-3h5.64l1.14 3zm-6.02-5L8.5 5.48 10.57 11H6.43zm15.16.59l-8.09 8.09L9.83 16l-1.41 1.41 5.09 5.09L23 13l-1.41-1.41z" fill="#5f6368"/></svg>
<svg class="a" style="left:126.20px;top:69.20px" width="15.59" height="15.59" viewBox="0 0 24 24"><path d="M18 4V3c0-.55-.45-1-1-1H5c-.55 0-1 .45-1 1v4c0 .55.45 1 1 1h12c.55 0 1-.45 1-1V6h1v4H9v11c0 .55.45 1 1 1h2c.55 0 1-.45 1-1v-9h8V4h-3z" fill="#5f6368"/></svg>
<div class="a" style="left:150px;top:66px;width:1px;height:20px;background:#dadce0"></div>
<div class="a" style="left:165.40px;top:65.32px;font-family:'Liberation Sans',sans-serif;font-size:11.2px;-webkit-text-stroke:0.25px currentColor;line-height:20px;white-space:nowrap;color:#3c4043;transform:scaleX(0.8873);transform-origin:0 0;">100%</div>
<svg class="a" style="left:201.5px;top:73.5px" width="9" height="5" viewBox="0 0 10 5"><path d="M0 0h10L5 5z" fill="#5f6368"/></svg>
<div class="a" style="left:218px;top:66px;width:1px;height:20px;background:#dadce0"></div>
<div class="a" style="left:232.60px;top:65.32px;font-family:'Liberation Sans',sans-serif;font-size:11.2px;-webkit-text-stroke:0.25px currentColor;line-height:20px;white-space:nowrap;color:#3c4043;transform:scaleX(0.9842);transform-origin:0 0;">Normal text</div>
<svg class="a" style="left:303.5px;top:73.5px" width="9" height="5" viewBox="0 0 10 5"><path d="M0 0h10L5 5z" fill="#5f6368"/></svg>
<div class="a" style="left:321px;top:66px;width:1px;height:20px;background:#dadce0"></div>
<div class="a" style="left:336.00px;top:65.32px;font-family:'Liberation Sans',sans-serif;font-size:11.2px;-webkit-text-stroke:0.25px currentColor;line-height:20px;white-space:nowrap;color:#3c4043;transform:scaleX(0.9465);transform-origin:0 0;">Times New...</div>
<svg class="a" style="left:406.5px;top:73.5px" width="9" height="5" viewBox="0 0 10 5"><path d="M0 0h10L5 5z" fill="#5f6368"/></svg>
<div class="a" style="left:424px;top:65px;width:80px;height:22px;border:1px solid #dadce0;border-radius:2px"></div>
<div class="a" style="left:445px;top:65px;width:1px;height:22px;background:#dadce0"></div>
<div class="a" style="left:481px;top:65px;width:1px;height:22px;background:#dadce0"></div>
<div class="a" style="left:431px;top:75px;width:9px;height:2px;background:#5f6368"></div>
<div class="a" style="left:488px;top:75px;width:9px;height:2px;background:#5f6368"></div>
<div class="a" style="left:491.5px;top:71.5px;width:2px;height:9px;background:#5f6368"></div>
<div class="a" style="left:457.80px;top:65.72px;font-family:'Liberation Sans',sans-serif;font-size:11.2px;-webkit-text-stroke:0.25px currentColor;line-height:20px;white-space:nowrap;color:#3c4043;transform:scaleX(0.9636);transform-origin:0 0;">12</div>
<svg class="a" style="left:509.88px;top:66.10px" width="20.98" height="20.98" viewBox="0 0 24 24"><path d="M15.6 10.79c.97-.67 1.65-1.77 1.65-2.79 0-2.26-1.75-4-4-4H7v14h7.04c2.09 0 3.71-1.7 3.71-3.79 0-1.52-.86-2.82-2.15-3.42zM10 6.5h3c.83 0 1.5.67 1.5 1.5s-.67 1.5-1.5 1.5h-3v-3zm3.5 9H10v-3h3.5c.83 0 1.5.67 1.5 1.5s-.67 1.5-1.5 1.5z" fill="#5f6368"/></svg>
<svg class="a" style="left:535.66px;top:66.04px" width="21.37" height="21.37" viewBox="0 0 24 24"><path d="M10 4v3h2.21l-3.42 8H6v3h8v-3h-2.21l3.42-8H18V4z" fill="#5f6368"/></svg>
<svg class="a" style="left:562.70px;top:67.26px" width="18.70" height="18.70" viewBox="0 0 24 24"><path d="M12 17c3.31 0 6-2.69 6-6V3h-2.5v8c0 1.93-1.57 3.5-3.5 3.5S8.5 12.93 8.5 11V3H6v8c0 3.31 2.69 6 6 6zm-7 2v2h14v-2H5z" fill="#5f6368"/></svg>
<svg class="a" style="left:588.19px;top:67.35px" width="18.80" height="18.80" viewBox="0 0 24 24"><path d="M11 3L5.5 17h2.25l1.12-3h6.25l1.12 3h2.25L13 3h-2zm-1.38 9L12 5.67 14.38 12H9.62z" fill="#5f6368"/></svg>
<div class="a" style="left:588px;top:84px;width:20px;height:3px;background:#000"></div>
<svg class="a" style="left:617.31px;top:66.94px" width="16.25" height="16.25" viewBox="0 0 24 24"><path d="M17.1 2.3l4.6 4.6-8.5 8.5-4.6-4.6zM7.9 11.5l4.6 4.6-2.3 2.3H5.6v-4.6zM2.5 21.5l3-3h4z" fill="#5f6368"/></svg>
<div class="a" style="left:645px;top:66px;width:1px;height:20px;background:#dadce0"></div>
<svg class="a" style="left:650.48px;top:66.98px" width="18.24" height="18.24" viewBox="0 0 24 24"><path d="M3.9 12c0-1.71 1.39-3.1 3.1-3.1h4V7H7c-2.76 0-5 2.24-5 5s2.24 5 5 5h4v-1.9H7c-1.71 0-3.1-1.39-3.1-3.1zM8 13h8v-2H8v2zm9-6h-4v1.9h4c1.71 0 3.1 1.39 3.1 3.1s-1.39 3.1-3.1 3.1h-4V17h4c2.76 0 5-2.24 5-5s-2.24-5-5-5z" fill="#5f6368"/></svg>
<svg class="a" style="left:678.5px;top:69.5px" width="13" height="13" viewBox="0 0 13 13"><path d="M1 1h11v8.5H2.5L1 12z" stroke="#5f6368" stroke-width="1.5" fill="none" stroke-linejoin="round"/><path d="M6.5 2.8v4.6M4.2 5.1h4.6" stroke="#5f6368" stroke-width="1.5"/></svg>
<svg class="a" style="left:701.98px;top:67.38px" width="16.20" height="16.20" viewBox="0 0 24 24"><path d="M19 5v14H5V5h14m0-2H5c-1.1 0-2 .9-2 2v14c0 1.1.9 2 2 2h14c1.1 0 2-.9 2-2V5c0-1.1-.9-2-2-2zm-4.86 8.86l-3 3.87L9 13.14 6 17h12l-3.86-5.14z" fill="#5f6368"/></svg>
<svg class="a" style="left:720.5px;top:73.5px" width="9" height="5" viewBox="0 0 10 5"><path d="M0 0h10L5 5z" fill="#5f6368"/></svg>
<div class="a" style="left:738px;top:66px;width:1px;height:20px;background:#dadce0"></div>
<div class="a" style="left:742px;top:64px;width:25px;height:23px;background:#e8f0fe;border-radius:2px"></div>
<div class="a" style="left:748.2px;top:69.25px;width:12.0px;height:1.9px;background:#1a73e8"></div><div class="a" style="left:748.2px;top:72.95px;width:9.0px;height:1.9px;background:#1a73e8"></div><div class="a" style="left:748.2px;top:76.65px;width:12.0px;height:1.9px;background:#1a73e8"></div><div class="a" style="left:748.2px;top:80.35px;width:9.0px;height:1.9px;background:#1a73e8"></div>
<div class="a" style="left:772.8px;top:69.25px;width:12.8px;height:1.9px;background:#5f6368"></div><div class="a" style="left:775.4px;top:72.95px;width:7.8px;height:1.9px;background:#5f6368"></div><div class="a" style="left:772.8px;top:76.65px;width:12.8px;height:1.9px;background:#5f6368"></div><div class="a" style="left:775.4px;top:80.35px;width:7.8px;height:1.9px;background:#5f6368"></div>
<div class="a" style="left:798.9px;top:69.25px;width:12.0px;height:1.9px;background:#5f6368"></div><div class="a" style="left:802.2px;top:72.95px;width:8.7px;height:1.9px;background:#5f6368"></div><div class="a" style="left:798.9px;top:76.65px;width:12.0px;height:1.9px;background:#5f6368"></div><div class="a" style="left:802.2px;top:80.35px;width:8.7px;height:1.9px;background:#5f6368"></div>
<div class="a" style="left:824px;top:69.25px;width:12.4px;height:1.9px;background:#5f6368"></div><div class="a" style="left:824px;top:72.95px;width:12.4px;height:1.9px;background:#5f6368"></div><div class="a" style="left:824px;top:76.65px;width:12.4px;height:1.9px;background:#5f6368"></div><div class="a" style="left:824px;top:80.35px;width:12.4px;height:1.9px;background:#5f6368"></div>
<div class="a" style="left:847px;top:66px;width:1px;height:20px;background:#dadce0"></div>
<svg class="a" style="left:855.29px;top:65.68px" width="19.31" height="19.31" viewBox="0 0 24 24"><path d="M6 7h2.5L5 3.5 1.5 7H4v10H1.5L5 20.5 8.5 17H6V7zm4-2v2h12V5H10zm0 14h12v-2H10v2zm0-6h12v-2H10v2z" fill="#5f6368"/></svg>
<div class="a" style="left:881px;top:66px;width:1px;height:20px;background:#dadce0"></div>
<svg class="a" style="left:891.51px;top:66.53px" width="17.84" height="17.84" viewBox="0 0 24 24"><path d="M2 17h2v.5H3v1h1v.5H2v1h3v-4H2v1zm1-9h1V4H2v1h1v3zm-1 3h1.8L2 13.1v.9h3v-1H3.2L5 10.9V10H2v1zm5-6v2h14V5H7zm0 14h14v-2H7v2zm0-6h14v-2H7v2z" fill="#5f6368"/></svg>
<svg class="a" style="left:915.5px;top:73.5px" width="9" height="5" viewBox="0 0 10 5"><path d="M0 0h10L5 5z" fill="#5f6368"/></svg>
<svg class="a" style="left:933.74px;top:66.83px" width="16.91" height="16.91" viewBox="0 0 24 24"><path d="M4 10.5c-.83 0-1.5.67-1.5 1.5s.67 1.5 1.5 1.5 1.5-.67 1.5-1.5-.67-1.5-1.5-1.5zm0-6c-.83 0-1.5.67-1.5 1.5S3.17 7.5 4 7.5 5.5 6.83 5.5 6 4.83 4.5 4 4.5zm0 12c-.83 0-1.5.68-1.5 1.5s.68 1.5 1.5 1.5 1.5-.68 1.5-1.5-.67-1.5-1.5-1.5zM7 19h14v-2H7v2zm0-6h14v-2H7v2zm0-8v2h14V5H7z" fill="#5f6368"/></svg>
<svg class="a" style="left:956.5px;top:73.5px" width="9" height="5" viewBox="0 0 10 5"><path d="M0 0h10L5 5z" fill="#5f6368"/></svg>
<svg class="a" style="left:974.23px;top:66.83px" width="17.33" height="17.33" viewBox="0 0 24 24"><path d="M11 17h10v-2H11v2zm-8-5l4 4V8l-4 4zm0 9h18v-2H3v2zM3 3v2h18V3H3zm8 6h10V7H11v2zm0 4h10v-2H11v2z" fill="#5f6368"/></svg>
<svg class="a" style="left:999.23px;top:66.83px" width="17.33" height="17.33" viewBox="0 0 24 24"><path d="M3 21h18v-2H3v2zM3 8v8l4-4-4-4zm8 9h10v-2H11v2zM3 3v2h18V3H3zm8 6h10V7H11v2zm0 4h10v-2H11v2z" fill="#5f6368"/></svg>
<div class="a" style="left:1024px;top:66px;width:1px;height:20px;background:#dadce0"></div>
<svg class="a" style="left:1034.06px;top:66.10px" width="17.29" height="17.29" viewBox="0 0 24 24"><path d="M3.27 5L2 6.27l6.97 6.97L6.5 19h3l1.57-3.66L16.73 21 18 19.73 3.55 5.27 3.27 5zM6 5v.18L8.82 8h2.4l-.72 1.68 2.1 2.1L14.21 8H20V5H6z" fill="#5f6368"/></svg>
<div class="a" style="left:1058px;top:66px;width:1px;height:20px;background:#dadce0"></div>
<svg class="a" style="left:1065.59px;top:67.90px" width="16.89" height="16.89" viewBox="0 0 24 24"><path d="M16.56 8.94L7.62 0 6.21 1.41l2.38 2.38-5.15 5.15c-.59.59-.59 1.54 0 2.12l5.5 5.5c.29.29.68.44 1.06.44s.77-.15 1.06-.44l5.5-5.5c.59-.58.59-1.53 0-2.12zM5.21 10L10 5.21 14.79 10H5.21zM19 11.5s-2 2.17-2 3.5c0 1.1.9 2 2 2s2-.9 2-2c0-1.33-2-3.5-2-3.5z" fill="#5f6368"/></svg>
<svg class="a" style="left:1084.5px;top:74.9px" width="9" height="5" viewBox="0 0 10 5"><path d="M0 0h10L5 5z" fill="#5f6368"/></svg>
<svg class="a" style="left:1100.31px;top:68.00px" width="17.36" height="17.36" viewBox="0 0 24 24"><path d="M17.75 7L14 3.25l-10 10V17h3.75l10-10zm2.96-2.96c.39-.39.39-1.02 0-1.41L18.37.29c-.39-.39-1.02-.39-1.41 0L15 2.25 18.75 6l1.96-1.96z" fill="#5f6368"/></svg>
<div class="a" style="left:1101px;top:84px;width:18px;height:3px;background:#000"></div>
<svg class="a" style="left:1120.5px;top:74.9px" width="9" height="5" viewBox="0 0 10 5"><path d="M0 0h10L5 5z" fill="#5f6368"/></svg>
<svg class="a" style="left:1137.73px;top:66.74px" width="16.56" height="16.56" viewBox="0 0 24 24"><path d="M3 17h18v-2H3v2zm0 3h18v-1H3v1zm0-7h18v-3H3v3zm0-9v4h18V4H3z" fill="#5f6368"/></svg>
<svg class="a" style="left:1164.43px;top:66.74px" width="16.56" height="16.56" viewBox="0 0 24 24"><path d="M3 16h5v-2H3v2zm6.5 0h5v-2h-5v2zm6.5 0h5v-2h-5v2zM3 20h2v-2H3v2zm4 0h2v-2H7v2zm4 0h2v-2h-2v2zm4 0h2v-2h-2v2zm4 0h2v-2h-2v2zM3 12h8v-2H3v2zm10 0h8v-2h-8v2zM3 4v4h18V4H3z" fill="#5f6368"/></svg>
<div class="a" style="left:1238.6px;top:64px;width:38.6px;height:22.7px;background:#e8f0fe;border-radius:4px"></div>
<svg class="a" style="left:1240px;top:64px" width="22" height="22" viewBox="0 0 22 22"><rect x="8.7" y="4" width="4.6" height="14" rx="2.3" transform="rotate(42 11 11)" fill="#cfe3fb" stroke="#1c5cb0" stroke-width="1.7"/></svg>
<svg class="a" style="left:1265.2px;top:73.5px" width="8" height="5" viewBox="0 0 10 5"><path d="M0 0h10L5 5z" fill="#244f8a"/></svg>
<div class="a" style="left:1282.7px;top:66px;width:1px;height:20px;background:#dadce0"></div>
<svg class="a" style="left:1288.67px;top:65.19px" width="21.33" height="21.33" viewBox="0 0 24 24"><path d="M12 8l-6 6 1.41 1.41L12 10.83l4.59 4.58L18 14z" fill="#5f6368"/></svg>
<svg class="a" style="left:1333px;top:75px" width="17.5" height="17.5" viewBox="0 0 18 18">
<rect x="0" y="0" width="18" height="18" rx="1.5" fill="#fbbc04"/>
<path d="M0 4V1.5A1.5 1.5 0 0 1 1.5 0H16.5A1.5 1.5 0 0 1 18 1.5V4z" fill="#1967d2"/>
<path d="M0 4h4v14H1.5A1.5 1.5 0 0 1 0 16.5z" fill="#1a73e8"/>
<path d="M0 14h14v4H1.5A1.5 1.5 0 0 1 0 16.5z" fill="#34a853"/>
<rect x="4" y="4" width="10" height="10" fill="#fff"/>
<path d="M14 4h4v10h-4z" fill="#fbbc04"/>
<path d="M14 14h4l-4 4z" fill="#ea4335"/>
<text x="9" y="12" font-size="6.5" text-anchor="middle" fill="#1a73e8" font-family="Liberation Sans" font-weight="bold">31</text>
</svg>
<svg class="a" style="left:1333px;top:125px" width="17.5" height="17.5" viewBox="0 0 18 18">
<rect x="0" y="0" width="18" height="18" rx="1.5" fill="#fbbc04"/>
<circle cx="9" cy="7.5" r="3.3" fill="#fff"/><rect x="7.3" y="10" width="3.4" height="3.2" fill="#fff"/>
</svg>
<svg class="a" style="left:1333.5px;top:176px" width="17" height="17" viewBox="0 0 18 18">
<circle cx="9" cy="9" r="9" fill="#4285f4"/>
<path d="M5 12.5l7.5-7.5 1.5 1.5-7.5 7.5z" fill="#fff"/>
<circle cx="5.2" cy="8.6" r="1.4" fill="#fbbc04"/>
</svg>
<div class="a" style="left:1331px;top:224px;width:22px;height:1px;background:#dadce0"></div>
<svg class="a" style="left:1332.57px;top:255.57px" width="18.86" height="18.86" viewBox="0 0 24 24"><path d="M19 13h-6v6h-2v-6H5v-2h6V5h2v6h6v2z" fill="#5f6368"/></svg>
<svg class="a" style="left:1328.51px;top:731.92px" width="22.34" height="22.34" viewBox="0 0 24 24"><path d="M10 6L8.59 7.41 13.17 12l-4.58 4.59L10 18l6-6z" fill="#5f6368"/></svg>
<div class="a" style="left:1304px;top:350.5px;width:9px;height:35px;background:#dadce0;border-radius:4px"></div>
<div class="a" style="left:1037.5px;top:427.5px;width:256.5px;height:258.5px;background:#fff;border-radius:6px;box-shadow:0 1px 4px rgba(60,64,67,.18),0 0 1px rgba(60,64,67,.2)"></div>
<svg class="a" style="left:1270.5px;top:440.5px" width="10" height="10" viewBox="0 0 10 10"><path d="M.7.7l8.6 8.6M9.3.7L.7 9.3" stroke="#8a8fa3" stroke-width="1.3"/></svg>
<svg class="a" style="left:1140px;top:460px" width="50" height="50" viewBox="0 0 50 50">
<path d="M21.5 7.2H33.8Q34.6 7.2 34.5 8L30.6 41.2" stroke="#37474a" stroke-width="1.5" fill="none"/>
<path d="M37.6 39.2L40 16.5Q40.5 14.6 41.8 15.2Q43 15.8 42.7 17.5L38.9 39.4" stroke="#37474a" stroke-width="1.4" fill="none"/>
<path d="M16.8 9.6L32.6 9.4L27.6 40.8L10.5 38.6Q8.3 38.2 8.6 36L12.3 14.6z" fill="#17b98f" stroke="#2f4a46" stroke-width="1.3" stroke-linejoin="round"/>
<path d="M32.6 9.4L27.6 40.8" stroke="#e8fff8" stroke-width="1.1"/>
<path d="M15.5 20.2h11M15.2 23.2h10M14.8 26.2h10M14.4 29.2h5" stroke="#eafff7" stroke-width="1.5"/>
</svg>
<div class="a" style="left:1087.00px;top:521.10px;font-family:'Liberation Sans',sans-serif;font-size:15px;font-weight:bold;line-height:20px;white-space:nowrap;color:#252831;transform:scaleX(0.8951);transform-origin:0 0;">This doc looks a bit long</div>
<div class="a" style="left:1054.00px;top:554.80px;font-family:'Liberation Sans',sans-serif;font-size:13px;line-height:20px;white-space:nowrap;color:#5a5f70;transform:scaleX(1.0304);transform-origin:0 0;">Do you want Grammarly to check this</div>
<div class="a" style="left:1062.70px;top:573.90px;font-family:'Liberation Sans',sans-serif;font-size:13px;line-height:20px;white-space:nowrap;color:#5a5f70;transform:scaleX(1.0254);transform-origin:0 0;">document, or are you just reading?</div>
<div class="a" style="left:1080.3px;top:621px;width:170px;height:29px;background:#1dbf94;border-radius:15px"></div>
<div class="a" style="left:1120.30px;top:624.93px;font-family:'Liberation Sans',sans-serif;font-size:10.6px;letter-spacing:1.1px;line-height:20px;white-space:nowrap;color:#f4fffb;transform:scaleX(0.9486);transform-origin:0 0;">YES, CHECK IT!</div>
<svg class="a" style="left:1266px;top:685px" width="12" height="11" viewBox="0 0 12 11"><path d="M2 0.5L9.2 7V0.5" fill="#fff" stroke="#d5d8dd" stroke-width=".9"/><path d="M1 0h10v1H1z" fill="#fff"/></svg>
<svg class="a" style="left:1274px;top:702px" width="22" height="22" viewBox="0 0 22 22"><circle cx="11" cy="11" r="10.5" fill="#c4c7d2"/><path d="M15.8 9.5A5.3 5.3 0 1 0 16 12.5h-4.5" stroke="#fff" stroke-width="2" fill="none"/><path d="M13 12.5l3 3v-3z" fill="#fff"/></svg>
<div class="a" style="left:1267.2px;top:727.6px;width:34.7px;height:34px;background:#f8f9fa;border:1px solid #dadce0;border-radius:2px"></div>
<svg class="a" style="left:1277px;top:735.5px" width="16" height="18" viewBox="0 0 16 18"><path d="M1.5 0h13A1.5 1.5 0 0 1 16 1.5v11A1.5 1.5 0 0 1 14.5 14H10l-2 3-2-3H1.5A1.5 1.5 0 0 1 0 12.5v-11A1.5 1.5 0 0 1 1.5 0z" fill="#5f6368"/><path d="M8 1.8Q8.6 6.2 12.8 7Q8.6 7.8 8 12.2Q7.4 7.8 3.2 7Q7.4 6.2 8 1.8z" fill="#fff"/></svg>

</div></body></html>
